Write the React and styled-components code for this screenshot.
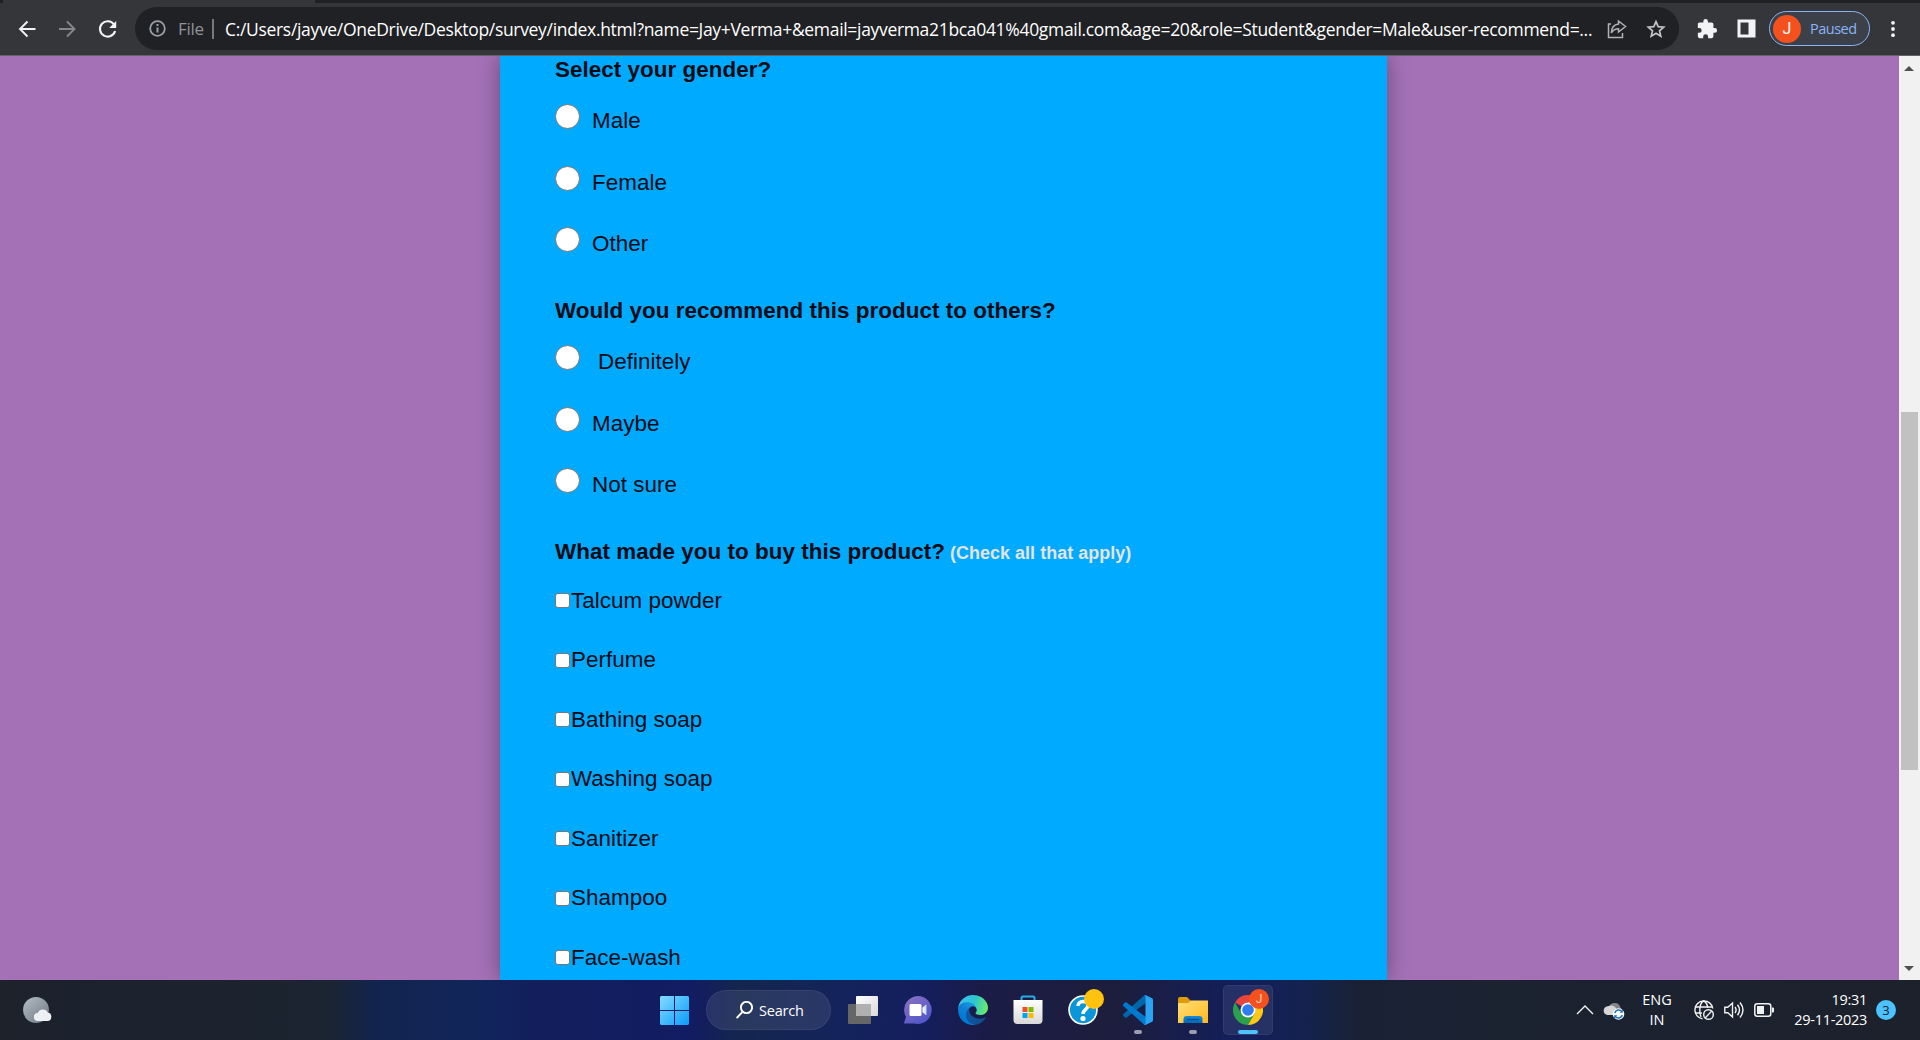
import React from "react";
import styled, { createGlobalStyle } from "styled-components";

const Global = createGlobalStyle`
  *, *::before, *::after { box-sizing: border-box; }
  body { margin: 0; overflow: hidden; background: #202124; }
`;

const uiFont = `"Open Sans", "Noto Sans", sans-serif`;

const Screen = styled.div`
  display: flex;
  flex-direction: column;
  width: 1920px;
  height: 1040px;
  overflow: hidden;
  font-family: ${uiFont};
`;

/* ---------- Browser chrome ---------- */

const TabEdge = styled.div`
  flex: none;
  height: 3px;
  padding-left: 3px;
  background: #202124;
`;

const ActiveTab = styled.div`
  width: 312px;
  height: 3px;
  background: #35363a;
`;

const Toolbar = styled.div`
  flex: none;
  display: flex;
  align-items: center;
  height: 53px;
  padding: 0 0 1px 15px;
  background: #35363a;
  border-bottom: 1px solid #626367;
`;

const NavButtons = styled.div`
  display: flex;
  gap: 16px;
  width: 120px;

  svg { display: block; }
`;

const AddressBar = styled.div`
  display: flex;
  align-items: center;
  width: 1544px;
  height: 43px;
  padding: 0 13px 0 13px;
  border-radius: 22px;
  background: #202124;
`;

const Scheme = styled.span`
  margin-left: 11px;
  width: 34px;
  font-size: 17px;
  letter-spacing: -0.3px;
  color: #8f9398;
`;

const Divider = styled.span`
  width: 2px;
  height: 20px;
  background: #75787c;
`;

const Url = styled.span`
  width: 1381px;
  margin-left: 11px;
  font-size: 17.5px;
  letter-spacing: ${(p) => p.$tracking}px;
  white-space: nowrap;
  color: #fff;
`;

const AddressActions = styled.div`
  display: flex;
  gap: 18px;
  svg { display: block; }
`;

const ToolbarActions = styled.div`
  display: flex;
  align-items: center;
  padding-left: 17px;
  svg { display: block; }
`;

const PanelButton = styled.div`
  margin-left: 19px;
`;

const ProfilePill = styled.div`
  display: flex;
  align-items: center;
  width: 101px;
  height: 35px;
  margin: 0 12px 0 13px;
  padding-left: 3px;
  border: 1px solid #8ab4f8;
  border-radius: 18px;
  background: #3c4048;
  color: #8ab4f8;
  font-size: 14.5px;
  letter-spacing: -0.5px;
`;

const Initial = styled.span`
  display: flex;
  align-items: center;
  justify-content: center;
  width: ${(p) => p.$size}px;
  height: ${(p) => p.$size}px;
  border-radius: 50%;
  background: #f4511e;
  color: ${(p) => p.$tint || "#fff"};
  font-family: Roboto, sans-serif;
  font-size: ${(p) => p.$font}px;
  letter-spacing: 0;
`;

const PillLabel = styled.span`
  margin-left: 9px;
`;

/* ---------- Survey page ---------- */

const Viewport = styled.div`
  flex: none;
  display: flex;
  height: 924px;
  overflow: hidden;
  background: #a471b7;
`;

const PageBody = styled.div`
  flex: 1;
  display: flex;
  overflow: hidden;
  padding-left: 500px;
`;

const Form = styled.form`
  width: 887px;
  height: 924px;
  padding-left: 55px;
  background: #00aaff;
  box-shadow: 0 0 20px rgba(0, 0, 0, 0.36);
  font-family: "Liberation Sans", Arial, sans-serif;
  font-size: 22.4px;
  line-height: 28px;
  letter-spacing: 0.04px;
  color: #020b14;
  overflow: hidden;
`;

const Question = styled.section`
  display: flex;
  flex-direction: column;
  margin-bottom: 28px;
`;

const Title = styled.h4`
  margin: 0;
  font-size: 22.4px;
  line-height: 28px;
  letter-spacing: 0.055px;
  white-space: nowrap;
`;

const Hint = styled.span`
  margin-left: 5px;
  font-size: 17.92px;
  color: #e4e4e4;
`;

const RadioRow = styled.label`
  display: flex;
  height: 61.67px;
  padding-top: 20px;
`;

const Radio = styled.input.attrs({ type: "radio" })`
  appearance: none;
  width: 25px;
  height: 25px;
  margin: 0;
  border: 1px solid #767676;
  border-radius: 50%;
  background: #fff;
`;

const RadioLabel = styled.span`
  margin: 3px 0 0 ${(p) => (p.$wide ? 18 : 12)}px;
`;

const CheckList = styled.div`
  padding-top: 4px;
`;

const CheckRow = styled.label`
  display: flex;
  align-items: center;
  height: 59.5px;
`;

const Check = styled.input.attrs({ type: "checkbox" })`
  appearance: none;
  width: 15px;
  height: 15px;
  margin: 0 1px 0 0;
  border: 1px solid #767676;
  border-radius: 3px;
  background: #fff;
`;

const ScrollBar = styled.div`
  display: flex;
  flex-direction: column;
  align-items: center;
  justify-content: space-between;
  width: 21px;
  padding: 10px 1px 9px 0;
  background: #f1f1f1;
  svg { display: block; }
`;

const Thumb = styled.div`
  width: 17px;
  height: 358px;
  margin-top: 144px;
  background: #c1c1c1;
`;

/* ---------- Taskbar ---------- */

const Taskbar = styled.div`
  flex: none;
  display: flex;
  align-items: center;
  height: 60px;
  padding-left: 20px;
  color: #fff;
  background: linear-gradient(
    90deg,
    #1f222b 0,
    #1b212d 60px,
    #1c232e 200px,
    #1b2431 330px,
    #12244e 375px,
    #11255a 480px,
    #121f5c 530px,
    #121c62 690px,
    #14264e 740px,
    #14245a 830px,
    #141e5e 920px,
    #1a1c48 980px,
    #1d1e3c 1110px,
    #181e4c 1180px,
    #131f5c 1240px,
    #132250 1300px,
    #1a2135 1360px,
    #1b2230 1500px,
    #1c212c 1920px
  );
  svg { display: block; }
`;

const WeatherSlot = styled.div`
  width: 640px;
`;

const SearchPill = styled.div`
  display: flex;
  align-items: center;
  width: 125px;
  height: 40px;
  margin: 0 7px 0 17px;
  padding-left: 29px;
  gap: 6px;
  border: 1px solid rgba(255, 255, 255, 0.06);
  border-radius: 20px;
  background: rgba(255, 255, 255, 0.09);
  font-size: 14.5px;
  letter-spacing: -0.2px;
`;

const AppRow = styled.div`
  display: flex;
`;

const AppTile = styled.div`
  position: relative;
  display: flex;
  align-items: center;
  justify-content: center;
  width: 50px;
  height: 50px;
  margin-right: 5px;
  border-radius: 5px;
  border: 1px solid ${(p) => (p.$active ? "rgba(255,255,255,.06)" : "transparent")};
  background: ${(p) => (p.$active ? "rgba(255,255,255,.08)" : "transparent")};

  &::after {
    content: "";
    display: ${(p) => (p.$running ? "block" : "none")};
    position: absolute;
    bottom: 0;
    width: ${(p) => (p.$active ? 20 : 8)}px;
    height: 4px;
    border-radius: 2px;
    background: ${(p) => (p.$active ? "#4cc2ff" : "#9c9daf")};
  }
`;

const TileBadge = styled.div`
  position: absolute;
  top: 3px;
  right: 3px;
  width: 20px;
  height: 20px;
  border-radius: 50%;
  background: #ffc20e;
`;

const TileInitial = styled(Initial)`
  position: absolute;
  top: 3px;
  right: 3px;
`;

const Tray = styled.div`
  display: flex;
  align-items: center;
  margin-left: auto;
  padding-right: 24px;
`;

const OverflowButton = styled.div`
  margin-right: 9px;
`;

const TrayText = styled.div`
  width: ${(p) => p.$width}px;
  text-align: ${(p) => p.$align};
  font-size: 14.5px;
  line-height: 20px;
  letter-spacing: ${(p) => p.$tracking || 0}px;
  white-space: nowrap;
`;

const Language = styled(TrayText)`
  margin-left: 9px;
`;

const TrayIcons = styled.div`
  display: flex;
  gap: 10px;
  margin: 0 0 0 14px;
`;

const CountBadge = styled.div`
  display: flex;
  align-items: center;
  justify-content: center;
  width: 20px;
  height: 20px;
  margin-left: 9px;
  border-radius: 50%;
  background: #4cc2ff;
  color: #10202c;
  font-size: 13px;
`;

/* ---------- Icons ---------- */

const Arrow = ({ color, flip }) => (
  <svg width="24" height="24" viewBox="0 0 24 24" fill="none" stroke={color} strokeWidth="1.900">
    <path d={flip ? "M4 12h15M12 4.500 19.500 12 12 19.500" : "M20.500 12H5.500M12.500 4.500 5 12l7.500 7.500"} />
  </svg>
);

const Reload = () => (
  <svg width="25" height="24" viewBox="0 0 24 24">
    <path d="M18.500 7.500A7.700 7.700 0 1 0 19.600 14" fill="none" stroke="#f1f3f4" strokeWidth="2.100" />
    <path d="M20.700 4v7h-7z" fill="#f1f3f4" />
  </svg>
);

const Info = () => (
  <svg width="19" height="19" viewBox="0 0 19 19" fill="none" stroke="#9aa0a6" strokeWidth="1.800">
    <circle cx="9.500" cy="9.500" r="7.300" />
    <path d="M9.500 8.500v5M9.500 5v2" strokeWidth="2" />
  </svg>
);

const Share = () => (
  <svg width="22" height="20" viewBox="0 0 22 20" fill="none" stroke="#b0b2b5" strokeWidth="1.500">
    <path d="M5 5H2.500v13.500h14V14" />
    <path d="M12.500 2 19.500 7.500 12.500 13V9.800C9 9.800 7 11 5.300 14 5.500 9 8 5.500 12.500 5z" />
  </svg>
);

const Star = () => (
  <svg width="20" height="20" viewBox="0 0 20 20" fill="none" stroke="#c2c4c6" strokeWidth="1.700">
    <path d="m10 2.600 2.200 5.100 5.500.5-4.200 3.600 1.300 5.400L10 14.300l-4.800 2.900 1.300-5.400-4.200-3.600 5.500-.5z" />
  </svg>
);

const Puzzle = () => (
  <svg width="22" height="22" viewBox="0 0 24 24" fill="#f1f3f4">
    <path d="M20.500 11H19V7c0-1.100-.9-2-2-2h-4V3.500a2.500 2.500 0 0 0-5 0V5H4c-1.100 0-2 .9-2 2v3.800h1.500a2.700 2.700 0 0 1 0 5.400H2V20c0 1.100.9 2 2 2h3.800v-1.500a2.700 2.700 0 0 1 5.400 0V22H17c1.100 0 2-.9 2-2v-4h1.500a2.500 2.500 0 0 0 0-5z" />
  </svg>
);

const SidePanel = () => (
  <svg width="19" height="19" viewBox="0 0 19 19">
    <path fillRule="evenodd" fill="#f1f3f4" d="M.5.500h18v18H.500zM3.500 3.500v12h8v-12z" />
  </svg>
);

const Dots = () => (
  <svg width="22" height="20" viewBox="0 0 22 20" fill="#f1f3f4">
    <circle cx="11" cy="3.800" r="1.900" />
    <circle cx="11" cy="10" r="1.900" />
    <circle cx="11" cy="16.200" r="1.900" />
  </svg>
);

const ScrollArrow = ({ down }) => (
  <svg width="10" height="5" viewBox="0 0 10 5" fill="#4f4f4f">
    <path d={down ? "M0 0h10L5 5z" : "M0 5h10L5 0z"} />
  </svg>
);

const Weather = () => (
  <svg width="32" height="30" viewBox="0 0 32 30">
    <defs>
      <linearGradient id="moon" x1="0" y1="0" x2="1" y2="1">
        <stop offset="0" stopColor="#b5bec8" />
        <stop offset="1" stopColor="#6e7680" />
      </linearGradient>
    </defs>
    <circle cx="16" cy="15" r="13" fill="url(#moon)" />
    <path d="M18 26a4 4 0 0 1-.2-8 5.500 5.500 0 0 1 10-.5A4.300 4.300 0 0 1 27.500 26z" fill="#eef0f3" />
  </svg>
);

const Windows = () => (
  <svg width="29" height="29" viewBox="0 0 29 29">
    <defs>
      <linearGradient id="win" gradientUnits="userSpaceOnUse" x1="0" y1="0" x2="29" y2="29">
        <stop offset="0" stopColor="#83dcff" />
        <stop offset="1" stopColor="#0a9bfa" />
      </linearGradient>
    </defs>
    <path fill="url(#win)" d="M1 0h13v14H0V1zM15 0h13l1 1v13H15zM0 15h14v14H1l-1-1zM15 15h14v13l-1 1H15z" />
  </svg>
);

const SearchGlyph = () => (
  <svg width="17" height="18" viewBox="0 0 17 18" fill="none" stroke="#fff" strokeWidth="1.900" strokeLinecap="round">
    <circle cx="10.500" cy="6.500" r="5.600" />
    <path d="M6.500 10.800 1.200 16.500" />
  </svg>
);

const TaskView = () => (
  <svg width="30" height="28" viewBox="0 0 30 28">
    <defs>
      <linearGradient id="tvFront" x1="0" y1="0" x2="1" y2="1">
        <stop offset="0" stopColor="#fff" />
        <stop offset="1" stopColor="#d9d9d9" />
      </linearGradient>
    </defs>
    <rect x="0" y="8" width="23" height="20" rx="1" fill="#666" />
    <rect x="8" y="0" width="22" height="20" rx="1" fill="url(#tvFront)" />
    <path d="M8 8h15v12H9l-1-1z" fill="#b0b0b0" />
  </svg>
);

const Chat = () => (
  <svg width="30" height="30" viewBox="0 0 30 30">
    <defs>
      <linearGradient id="chat" x1="0" y1="0" x2=".7" y2="1">
        <stop offset="0" stopColor="#8f72c4" />
        <stop offset="1" stopColor="#4f55c8" />
      </linearGradient>
      <linearGradient id="lens" x1="0" y1="0" x2="1" y2="0">
        <stop offset="0" stopColor="#fff" />
        <stop offset="1" stopColor="#b7d7ff" />
      </linearGradient>
    </defs>
    <path d="M15 1a14 14 0 1 1-4 27.500H1.500C1 28.500.8 28 1.200 27.500L3 22A14 14 0 0 1 15 1z" fill="url(#chat)" />
    <rect x="6.500" y="9" width="12" height="12" rx="1.500" fill="#fff" />
    <path d="m19.500 12.500 3-2.500c.5-.4 1-.2 1 .4v9c0 .6-.5.800-1 .4l-3-2.500z" fill="url(#lens)" />
  </svg>
);

const Edge = () => (
  <svg width="30" height="30" viewBox="0 0 256 256">
    <defs>
      <linearGradient id="eA" x1="60" y1="178" x2="231" y2="178" gradientUnits="userSpaceOnUse">
        <stop offset="0" stopColor="#0c59a4" />
        <stop offset="1" stopColor="#114a8b" />
      </linearGradient>
      <linearGradient id="eB" x1="157" y1="100" x2="46" y2="221" gradientUnits="userSpaceOnUse">
        <stop offset="0" stopColor="#1b9de2" />
        <stop offset=".5" stopColor="#0f7fd3" />
        <stop offset="1" stopColor="#0078d4" />
      </linearGradient>
      <linearGradient id="eC" x1="20" y1="60" x2="240" y2="120" gradientUnits="userSpaceOnUse">
        <stop offset="0" stopColor="#35c1f1" />
        <stop offset=".5" stopColor="#2fc6cf" />
        <stop offset="1" stopColor="#66eb6e" />
      </linearGradient>
    </defs>
    <path fill="url(#eA)" d="M231 190.500c-3.400 1.800-6.900 3.300-10.500 4.700a101.900 101.900 0 0 1-35.900 6.400c-47.300 0-88.500-32.500-88.500-74.300a31.500 31.500 0 0 1 16.400-27.300c-42.800 1.800-53.800 46.400-53.800 72.500 0 73.900 68.100 81.400 82.800 81.400 7.900 0 19.800-2.300 27-4.600l1.300-.4a128.300 128.300 0 0 0 66.600-52.800 4 4 0 0 0-5.400-5.600z" />
    <path fill="url(#eB)" d="M105.700 241.400a79.200 79.200 0 0 1-22.700-21.300 80.700 80.700 0 0 1 29.500-120c3.200-1.500 8.500-4.100 15.600-4a32.400 32.400 0 0 1 25.700 13 31.900 31.900 0 0 1 6.300 18.700c0-.2 24.500-79.600-80-79.600C36.200 48.200.2 89.900.2 126.500a130.500 130.500 0 0 0 12.100 56 128 128 0 0 0 156.400 67.100 75.500 75.500 0 0 1-62.800-8z" />
    <path fill="url(#eC)" d="M152.300 148.900c-.8 1-3.300 2.500-3.300 5.700 0 2.600 1.700 5.100 4.700 7.200 14.400 10 41.500 8.700 41.500 8.700a59.600 59.600 0 0 0 30.300-8.300 61.400 61.400 0 0 0 30.400-52.900c.3-22.400-8-37.300-11.300-43.900C223.500 23.900 177.700 0 128 0A128 128 0 0 0 0 126.200c.5-36.500 36.800-66 80-66 3.500 0 23.500.3 42 10a72.600 72.600 0 0 1 30.900 29.400c6.100 10.600 7.200 24.100 7.200 29.500s-2.700 13.300-7.800 19.800z" />
  </svg>
);

const Store = () => (
  <svg width="30" height="30" viewBox="0 0 30 30">
    <defs>
      <linearGradient id="bag" x1="0" y1="0" x2="0" y2="1">
        <stop offset="0" stopColor="#fff" />
        <stop offset="1" stopColor="#d8d8d8" />
      </linearGradient>
    </defs>
    <path d="M8.500 6V3q0-1.500 1.500-1.500h10q1.500 0 1.500 1.500v3" fill="none" stroke="#22aee8" strokeWidth="2" />
    <path d="M.5 5h29v20q0 4-4 4h-21q-4 0-4-4z" fill="url(#bag)" />
    <path fill="#f25022" d="M9.500 12h5v5h-5z" />
    <path fill="#7fba00" d="M15.500 12h5v5h-5z" />
    <path fill="#00a4ef" d="M9.500 18h5v5h-5z" />
    <path fill="#ffb900" d="M15.500 18h5v5h-5z" />
  </svg>
);

const Help = () => (
  <svg width="30" height="30" viewBox="0 0 30 30">
    <circle cx="15" cy="15" r="14" fill="#0a96d8" stroke="#fff" strokeWidth="1.600" />
    <path d="M10 11c0-6 10-6 10-.5 0 4-5 4-5 8.500" fill="none" stroke="#fff" strokeWidth="3.600" />
    <circle cx="15" cy="23.500" r="2.600" fill="#fff" />
  </svg>
);

const VsCode = () => (
  <svg width="30" height="30" viewBox="0 0 100 100">
    <path fill="#0065a9" d="M96.500 10.800 75.900.9a6.200 6.200 0 0 0-7.100 1.200L1.300 63.700a4.200 4.200 0 0 0 0 6.200l5.500 5c1.500 1.400 3.700 1.500 5.300.2l81.300-61.600c2.700-2.100 6.600-.2 6.600 3.300v-.3c0-2.400-1.400-4.600-3.500-5.700z" />
    <path fill="#007acc" d="M96.500 89.200 75.900 99.100a6.200 6.200 0 0 1-7.100-1.200L1.300 36.300a4.200 4.200 0 0 1 0-6.200l5.500-5c1.500-1.400 3.700-1.500 5.300-.2l81.300 61.600c2.700 2.100 6.600.2 6.600-3.300v.3c0 2.400-1.400 4.600-3.500 5.700z" />
    <path fill="#29a5f3" d="M75.900 99.100a6.200 6.200 0 0 1-7.100-1.200c2.300 2.300 6.200.7 6.200-2.600V4.700c0-3.300-3.900-4.900-6.200-2.600A6.200 6.200 0 0 1 75.900.9l20.600 9.900a6.300 6.300 0 0 1 3.500 5.600v67.200a6.300 6.300 0 0 1-3.500 5.600z" />
  </svg>
);

const Folder = () => (
  <svg width="30" height="30" viewBox="0 0 30 30">
    <defs>
      <linearGradient id="fold" x1="0" y1="0" x2="1" y2="1">
        <stop offset="0" stopColor="#ffe07a" />
        <stop offset="1" stopColor="#ffb91c" />
      </linearGradient>
      <linearGradient id="tray" x1="0" y1="0" x2="0" y2="1">
        <stop offset="0" stopColor="#168ad8" />
        <stop offset="1" stopColor="#0867b2" />
      </linearGradient>
    </defs>
    <path d="M0 4q0-2 2-2h7l4 4v5H0z" fill="#e09c08" />
    <path d="M0 8h10l3-2.500h17V28H0z" fill="url(#fold)" />
    <path d="M5.500 28v-4q0-3 3-3h13q3 0 3 3v4z" fill="url(#tray)" />
    <path d="M9 24.500h12" stroke="#064d8a" strokeWidth="1.200" />
  </svg>
);

const Chrome = () => (
  <svg width="30" height="30" viewBox="0 0 30 30">
    <path d="M2 7.500A15 15 0 0 1 28 7.500H15A7.500 7.500 0 0 0 8.500 11.250z" fill="#e8453c" />
    <path d="M2 7.500 8.500 18.750 21.500 18.750 15 30A15 15 0 0 1 2 7.500z" fill="#2ca04c" />
    <path d="M15 7.500h13A15 15 0 0 1 15 30l6.500-11.250z" fill="#fdc715" />
    <circle cx="15" cy="15" r="7.500" fill="#fff" />
    <circle cx="15" cy="15" r="5.800" fill="#2f7cf0" />
  </svg>
);

const Chevron = () => (
  <svg width="18" height="20" viewBox="0 0 18 20" fill="none" stroke="#f2f2f2" strokeWidth="1.400">
    <path d="m1 14 8-8 8 8" />
  </svg>
);

const CloudSync = () => (
  <svg width="22" height="20" viewBox="0 0 22 20">
    <path d="M6 7a6 6 0 0 1 11.500.5A5 5 0 0 1 18 14H8z" fill="#858585" />
    <path d="M5 15a4.300 4.300 0 0 1 0-8.700 6 6 0 0 1 9 4.700L13 15z" fill="#d6d6d6" />
    <circle cx="15.500" cy="14" r="5.800" fill="#fff" />
    <path d="M11.800 13a4 4 0 0 1 7-1.500M19.200 15a4 4 0 0 1-7 1.500" fill="none" stroke="#1270c4" strokeWidth="1.500" />
    <path d="M19.800 9.500v3.200h-3.200zM11.200 18.500v-3.200h3.200z" fill="#1270c4" />
  </svg>
);

const Globe = () => (
  <svg width="20" height="20" viewBox="0 0 20 20" fill="none" stroke="#f2f2f2" strokeWidth="1.400">
    <path d="M8.500 18.800A9 9 0 1 1 18.800 8.500" />
    <path d="M7 17C4.800 12 5.300 3 9.700 1 12 2 13.500 5 13.600 8M1.200 7h17.200M1 13h7" />
    <circle cx="14.500" cy="14.500" r="4.800" />
    <path d="m11.200 17.900 6.600-6.800" />
  </svg>
);

const Speaker = () => (
  <svg width="20" height="20" viewBox="0 0 20 20" fill="none" stroke="#f2f2f2" strokeWidth="1.400">
    <path d="M.8 7.200h3L8.500 3v14l-4.700-4.200h-3zM11 7q2.200 3 0 6M13.500 4.800q4 5.200 0 10.400M16 2.500q6 7.500 0 15" />
  </svg>
);

const Battery = () => (
  <svg width="20" height="20" viewBox="0 0 20 20">
    <rect x=".8" y="3.800" width="16" height="12.400" rx="2.500" fill="none" stroke="#f2f2f2" strokeWidth="1.500" />
    <path d="M3 6h7v8H3zM18 7.500h1q1 0 1 1v3q0 1-1 1h-1z" fill="#f2f2f2" />
  </svg>
);

/* ---------- Content ---------- */

const radioQuestions = [
  { name: "gender", title: "Select your gender?", options: ["Male", "Female", "Other"] },
  {
    name: "user-recommend",
    title: "Would you recommend this product to others?",
    options: ["Definitely", "Maybe", "Not sure"],
  },
];

const products = [
  "Talcum powder",
  "Perfume",
  "Bathing soap",
  "Washing soap",
  "Sanitizer",
  "Shampoo",
  "Face-wash",
];

const url =
  "C:/Users/jayve/OneDrive/Desktop/survey/index.html?name=Jay+Verma+&email=jayverma21bca041%40gmail.com&age=20&role=Student&gender=Male&user-recommend=...";

export default function App() {
  return (
    <Screen>
      <Global />
      <TabEdge>
        <ActiveTab />
      </TabEdge>
      <Toolbar>
        <NavButtons>
          <Arrow color="#f1f3f4" />
          <Arrow color="#85878a" flip />
          <Reload />
        </NavButtons>
        <AddressBar>
          <Info />
          <Scheme>File</Scheme>
          <Divider />
          <Url $tracking={-0.32}>{url}</Url>
          <AddressActions>
            <Share />
            <Star />
          </AddressActions>
        </AddressBar>
        <ToolbarActions>
          <Puzzle />
          <PanelButton>
            <SidePanel />
          </PanelButton>
          <ProfilePill>
            <Initial $size={28} $font={16}>J</Initial>
            <PillLabel>Paused</PillLabel>
          </ProfilePill>
          <Dots />
        </ToolbarActions>
      </Toolbar>

      <Viewport>
        <PageBody>
          <Form>
            {radioQuestions.map((q) => (
              <Question key={q.name}>
                <Title>{q.title}</Title>
                {q.options.map((o) => (
                  <RadioRow key={o}>
                    <Radio name={q.name} />
                    <RadioLabel $wide={o === "Definitely"}>{o}</RadioLabel>
                  </RadioRow>
                ))}
              </Question>
            ))}
            <Question>
              <Title>
                What made you to buy this product?
                <Hint>(Check all that apply)</Hint>
              </Title>
              <CheckList>
                {products.map((p) => (
                  <CheckRow key={p}>
                    <Check />
                    {p}
                  </CheckRow>
                ))}
              </CheckList>
            </Question>
          </Form>
        </PageBody>
        <ScrollBar>
          <ScrollArrow />
          <Thumb />
          <ScrollArrow down />
        </ScrollBar>
      </Viewport>

      <Taskbar>
        <WeatherSlot>
          <Weather />
        </WeatherSlot>
        <Windows />
        <SearchPill>
          <SearchGlyph />
          Search
        </SearchPill>
        <AppRow>
          <AppTile><TaskView /></AppTile>
          <AppTile><Chat /></AppTile>
          <AppTile><Edge /></AppTile>
          <AppTile><Store /></AppTile>
          <AppTile>
            <Help />
            <TileBadge />
          </AppTile>
          <AppTile $running><VsCode /></AppTile>
          <AppTile $running><Folder /></AppTile>
          <AppTile $running $active>
            <Chrome />
            <TileInitial $size={20} $font={12} $tint="#ffd0c0">J</TileInitial>
          </AppTile>
        </AppRow>
        <Tray>
          <OverflowButton>
            <Chevron />
          </OverflowButton>
          <CloudSync />
          <Language $width={46} $align="center">ENG<br />IN</Language>
          <TrayIcons>
            <Globe />
            <Speaker />
            <Battery />
          </TrayIcons>
          <TrayText $width={93} $align="right" $tracking={-0.3}>19:31<br />29-11-2023</TrayText>
          <CountBadge>3</CountBadge>
        </Tray>
      </Taskbar>
    </Screen>
  );
}
